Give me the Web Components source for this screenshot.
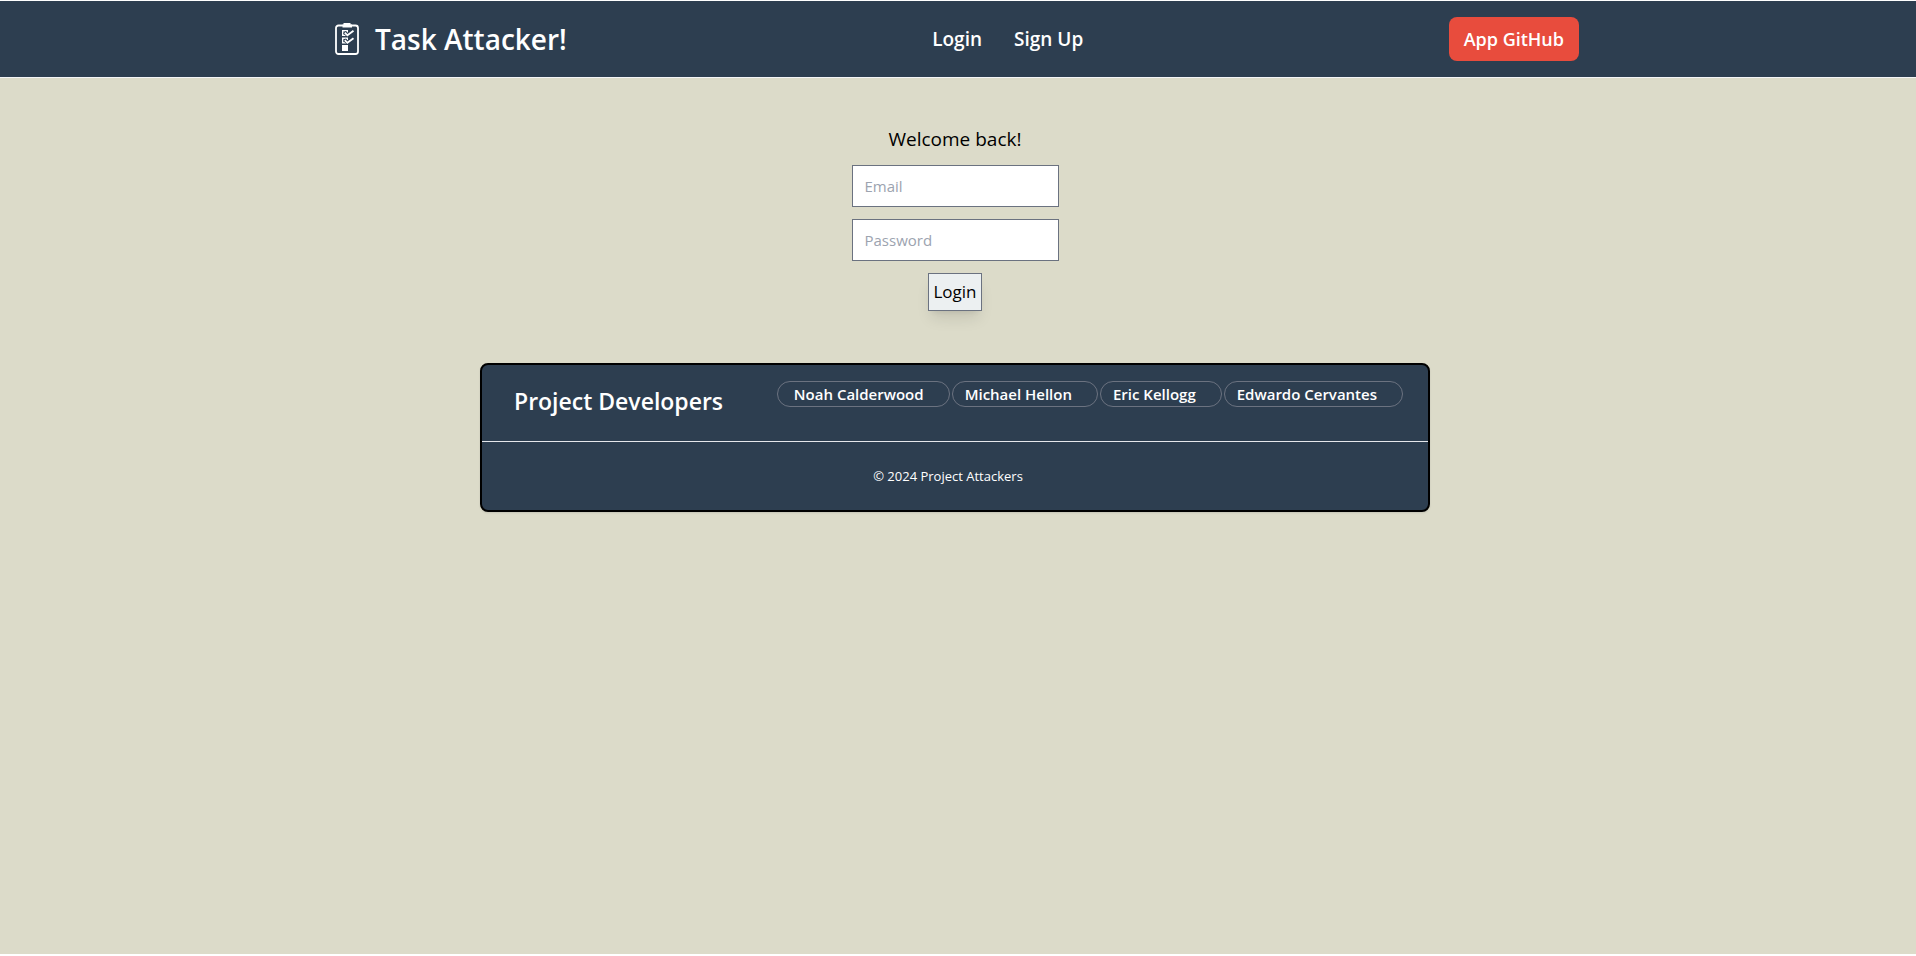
<!DOCTYPE html>
<html lang="en">
<head>
<meta charset="utf-8">
<meta name="viewport" content="width=device-width, initial-scale=1">
<title>Task Attacker!</title>
<style>
  html { box-sizing: border-box; min-height: 100vh; background: #fff; padding: 1px 0 2px; display: flex; }
  body { flex: 1; margin: 0; background: #dcdbc9; color: #000; font: 16px/24px "Open Sans", "Noto Sans", sans-serif; }
</style>
</head>
<body>
<task-app></task-app>
<script>
const define = (name, markup) => {
  const template = document.createElement('template');
  template.innerHTML = markup;
  customElements.define(name, class extends HTMLElement {
    constructor() {
      super();
      this.attachShadow({ mode: 'open' }).append(template.content.cloneNode(true));
    }
  });
};

define('clipboard-icon', `
  <style>:host { display: block; width: 24px; height: 32px; } svg { display: block; }</style>
  <svg width="24" height="32" viewBox="0 0 24 32" fill="none" stroke="#fff" aria-hidden="true">
    <rect x="1" y="2.5" width="22" height="28.5" rx="2.5" stroke-width="1.8"/>
    <path d="M8.5 0h7v1.500H17V4.500H7.500V1.500h1z" fill="#fff" stroke="none"/>
    <rect x="7.700" y="7.700" width="4.600" height="4.600" stroke-width="1.400"/>
    <path d="M9.500 9.200l3 2.800L18.500 7.500" stroke="#2d3e50" stroke-width="3.600"/>
    <path d="M9.800 9.700l2.600 2.600L18.500 7.800" stroke-width="1.800"/>
    <rect x="7.700" y="15.200" width="4.600" height="4.600" stroke-width="1.400"/>
    <path d="M9.500 16.700l3 2.800L18.500 15" stroke="#2d3e50" stroke-width="3.600"/>
    <path d="M9.800 17.200l2.600 2.600L18.500 15.300" stroke-width="1.800"/>
    <path d="M7 22h6v6H7z" fill="#fff" stroke="none"/>
  </svg>`);

define('nav-link', `
  <style>
    :host { display: block; }
    a { color: #fff; text-decoration: none; font-weight: 600; font-size: 19px; line-height: 28px; }
  </style>
  <a href="#"><slot></slot></a>`);

define('site-header', `
  <style>
    :host { display: block; background: #2d3e50; border-bottom: 1px solid #f3f4f6; padding-right: 2px; }
    header { box-sizing: border-box; max-width: 1276px; margin: 0 auto; padding: 16px;
      display: flex; justify-content: space-between; align-items: center; flex-wrap: wrap; gap: 16px; }
    .brand { display: flex; align-items: center; gap: 16px; color: #fff; text-decoration: none;
      font-size: 28px; line-height: 36px; font-weight: 600; }
    nav { display: flex; gap: 32px; }
    button { border: 0; border-radius: 8px; background: #e84c3d; color: #fff; padding: 8px 15px;
      font: 600 18px/28px "Open Sans", "Noto Sans", sans-serif; }
  </style>
  <header>
    <a class="brand" href="#"><clipboard-icon></clipboard-icon><span>Task Attacker!</span></a>
    <nav><nav-link>Login</nav-link><nav-link>Sign Up</nav-link></nav>
    <button type="button">App GitHub</button>
  </header>`);

define('login-form', `
  <style>
    :host { display: block; }
    form { display: flex; flex-direction: column; align-items: center; gap: 12px; }
    h1 { margin: 0; font-weight: 400; font-size: 19px; line-height: 28px; }
    input { box-sizing: border-box; width: 207px; height: 42px; padding: 8px 12px; border: 1px solid #6b7280;
      border-radius: 0; background: #fff; font: 15px/24px "Open Sans", "Noto Sans", sans-serif; }
    input::placeholder { color: #9ca3af; opacity: 1; }
    button { border: 1px solid #6b7280; background: #ecf0f1; color: #000; padding: 4px;
      font: 17px/28px "Open Sans", "Noto Sans", sans-serif;
      box-shadow: 0 10px 15px -3px rgba(0,0,0,.1), 0 4px 6px -4px rgba(0,0,0,.1); }
  </style>
  <form>
    <h1>Welcome back!</h1>
    <input type="email" placeholder="Email" aria-label="Email">
    <input type="password" placeholder="Password" aria-label="Password">
    <button type="submit">Login</button>
  </form>`);

define('developer-pill', `
  <style>
    :host { display: block; border: 1px solid #6b7280; border-radius: 16px; padding: 0 25px 0 12px; }
    :host(:first-child) { padding-left: 16px; }
    a { display: block; color: #fff; text-decoration: none; font-weight: 600; font-size: 15px; line-height: 24px; white-space: nowrap; }
  </style>
  <a href="#"><slot></slot></a>`);

define('site-footer', `
  <style>
    :host { display: block; box-sizing: border-box; width: 100%; max-width: 950px; border: 2px solid #000;
      border-radius: 8px; background: #2d3e50; color: #fff; box-shadow: 0 1px 2px rgba(0,0,0,.1); }
    .top { display: flex; justify-content: space-between; align-items: flex-start; flex-wrap: wrap;
      padding: 16px 25px 32px 32px; border-bottom: 1px solid #e5e7eb; }
    h2 { margin: 4px 0 0; font-size: 23px; line-height: 32px; height: 24px; font-weight: 600; }
    .people { display: flex; flex-wrap: wrap; gap: 2px; margin-bottom: 2px; }
    p { margin: 0; padding: 24px 38px 24px 24px; font-size: 13px; line-height: 20px; text-align: center; }
  </style>
  <footer>
    <div class="top">
      <h2>Project Developers</h2>
      <div class="people">
        <developer-pill>Noah Calderwood</developer-pill>
        <developer-pill>Michael Hellon</developer-pill>
        <developer-pill>Eric Kellogg</developer-pill>
        <developer-pill>Edwardo Cervantes</developer-pill>
      </div>
    </div>
    <p>© 2024 Project Attackers</p>
  </footer>`);

define('task-app', `
  <style>
    :host { display: block; }
    main { display: flex; flex-direction: column; align-items: center; gap: 52px; padding: 47px 6px 48px 0; }
  </style>
  <site-header></site-header>
  <main><login-form></login-form><site-footer></site-footer></main>`);
</script>
</body>
</html>
